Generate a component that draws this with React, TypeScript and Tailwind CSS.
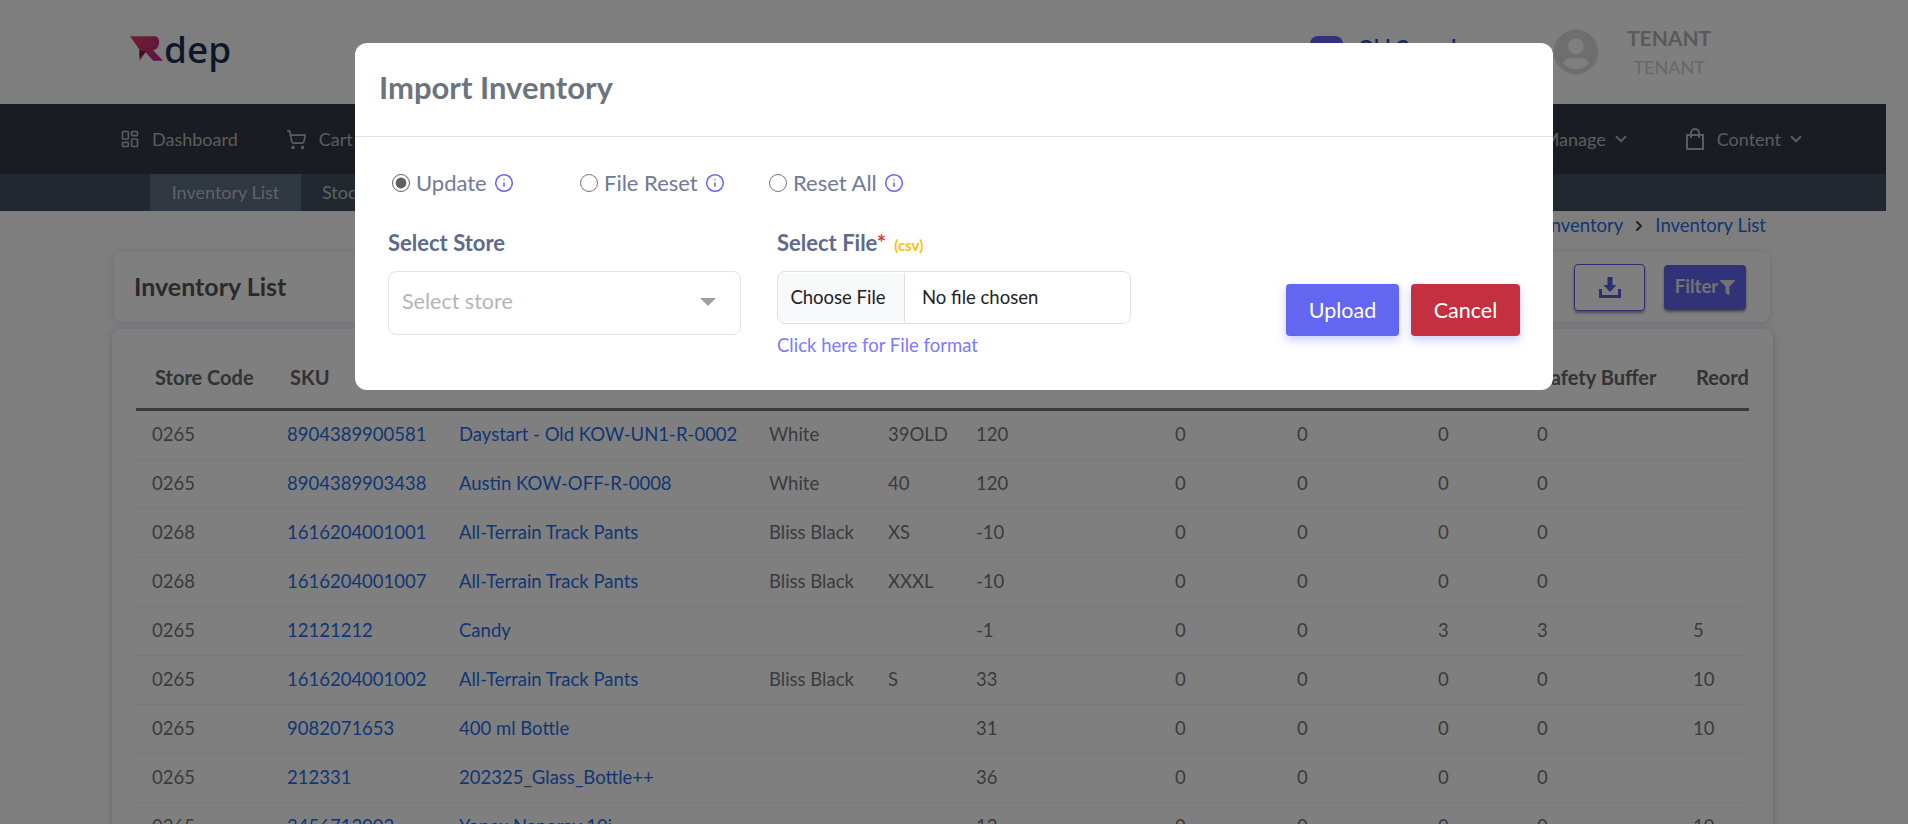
import { ChevronDown, ChevronRight, Info, LayoutDashboard, ShoppingCart } from 'lucide-react';
import { FaFilter, FaUserCircle } from 'react-icons/fa';

const rows = [
  ['0265', '8904389900581', 'Daystart - Old KOW-UN1-R-0002', 'White', '39OLD', '120', '0', '0', '0', '0', ''],
  ['0265', '8904389903438', 'Austin KOW-OFF-R-0008', 'White', '40', '120', '0', '0', '0', '0', ''],
  ['0268', '1616204001001', 'All-Terrain Track Pants', 'Bliss Black', 'XS', '-10', '0', '0', '0', '0', ''],
  ['0268', '1616204001007', 'All-Terrain Track Pants', 'Bliss Black', 'XXXL', '-10', '0', '0', '0', '0', ''],
  ['0265', '12121212', 'Candy', '', '', '-1', '0', '0', '3', '3', '5'],
  ['0265', '1616204001002', 'All-Terrain Track Pants', 'Bliss Black', 'S', '33', '0', '0', '0', '0', '10'],
  ['0265', '9082071653', '400 ml Bottle', '', '', '31', '0', '0', '0', '0', '10'],
  ['0265', '212331', '202325_Glass_Bottle++', '', '', '36', '0', '0', '0', '0', ''],
  ['0265', '3456712002', 'Yonex Nanoray 10i', '', '', '12', '0', '0', '0', '0', '10'],
];

const headers = ['Store Code', 'SKU', 'Product Name', 'Color', 'Size', 'Available', 'Reserved', 'Damaged', 'Hold', 'Safety Buffer', 'Reorder Level'];

const gridCols = 'grid grid-cols-[135px_172px_310px_119px_88px_199px_122px_141px_99px_156px_160px]';

const RadioOption = ({ label, checked, className }: { label: string; checked?: boolean; className: string }) => (
  <label className={`flex items-center gap-[6px] ${className}`}>
    <input type="radio" name="mode" defaultChecked={checked} className="w-[18px] h-[18px] m-0 accent-[#5f5f5f]" />
    <span>{label}</span>
    <Info size={20} strokeWidth={1.8} className="text-[#6366f1] ml-[1px]" />
  </label>
);

const Logo = () => (
  <div className="flex items-center -mt-[8px]">
    <svg width="33" height="25" viewBox="0 0 97 72">
      <defs>
        <linearGradient id="logo-grad" x1="0" y1="0" x2="1" y2="0.6">
          <stop offset="0" stopColor="#e8404f" />
          <stop offset="1" stopColor="#b82a8c" />
        </linearGradient>
      </defs>
      <path d="M0 0H72C85 0 88 14 84 27C81 36 74 40 68 41L97 72H68L46 47L28 72V40Z" fill="url(#logo-grad)" />
      <path d="M28 40L46 47L28 62Z" fill="#6a2440" />
    </svg>
    <span className="text-[37px] leading-none font-medium text-[#182e55] ml-[1px] font-['Noto_Sans',sans-serif]">dep</span>
  </div>
);

export default function App() {
  return (
    <div className="relative w-full h-[824px] overflow-hidden bg-[#fdfdfd] font-['Lato',sans-serif] text-[#777]">
      <div className="w-[1886px]">
        <header className="h-[104px] flex items-center justify-between pl-[130px] pr-[136px]">
          <Logo />
          <div className="flex items-center h-full">
            <div className="flex items-start gap-[15px] mr-[45px] self-start pt-9">
              <div className="w-[33px] h-[24px] rounded-lg bg-[#6366f1]" />
              <span className="text-[20px] leading-6 -mt-[1px] font-bold text-[#2a4fd0]">Old Console</span>
            </div>
            <div className="w-[238px] h-full flex items-center gap-7 pl-[41px] bg-white">
              <FaUserCircle size={46} className="text-[#dcdcdc]" />
              <div className="flex flex-col items-center">
                <span className="text-[21px] leading-7 font-bold text-[#b4b4b4]">TENANT</span>
                <span className="text-lg leading-7 mt-[1px] text-[#d0d0d0]">TENANT</span>
              </div>
            </div>
          </div>
        </header>

        <nav className="h-[70px] flex items-center justify-between pl-[120px] pr-[81px] bg-[#323846] text-[#b8b8b8] text-[18px]">
          <div className="flex items-center gap-[48px]">
            <span className="flex items-center gap-3"><LayoutDashboard size={20} />Dashboard</span>
            <span className="flex items-center gap-3"><ShoppingCart size={21} />Cart</span>
          </div>
          <div className="flex items-center gap-[55px]">
            <span className="flex items-center gap-[6px]">Manage<ChevronDown size={18} strokeWidth={2.5} /></span>
            <span className="flex items-center gap-[12px]">
              <svg width="20" height="22" viewBox="0 0 20 22" fill="none" stroke="currentColor" strokeWidth="2">
                <rect x="2" y="7" width="16" height="14" />
                <path d="M6 10V5a4 4 0 0 1 8 0v5" />
              </svg>
              Content
              <ChevronDown size={18} strokeWidth={2.5} className="-ml-[6px]" />
            </span>
          </div>
        </nav>

        <div className="h-[37px] flex pl-[150px] bg-[#43505e] text-[#c4c4c4] text-[18px]">
          <span className="w-[151px] flex items-center justify-center bg-[#5f6e82]">Inventory List</span>
          <span className="w-[151px] flex items-center pl-[21px]">Stock Ledger</span>
        </div>

        <div className="h-[41px] flex items-center justify-end gap-2 pb-3 pr-[120px] text-[18.5px] text-[#1f6ee8]">
          <span>Inventory</span>
          <ChevronRight size={16} strokeWidth={3} className="text-[#444]" />
          <span>Inventory List</span>
        </div>

        <div className="ml-[114px] w-[1656px] h-[70px] flex items-center justify-between pl-5 pr-6 rounded-lg bg-white shadow-[0_1px_6px_rgba(90,90,200,0.2)]">
          <h2 className="text-[25px] font-bold text-[#555]">Inventory List</h2>
          <div className="flex items-center gap-[19px]">
            <button className="w-[71px] h-[47px] flex items-center justify-center rounded border border-[#5a5adf] shadow-[0_2px_3px_rgba(0,0,0,0.4)]">
              <svg width="24" height="24" viewBox="0 0 24 24" fill="#5a5adf">
                <path d="M9.5 2h5v8h4l-6.500 7-6.500-7h4z" />
                <path d="M1 14h3v6h16v-6h3v9H1z" />
              </svg>
            </button>
            <button className="w-[82px] h-[45px] flex items-center justify-center gap-[2px] rounded bg-[#6366f1] text-[#e4e4e4] font-bold text-[18.5px] shadow-[0_2px_3px_rgba(0,0,0,0.4)]">
              Filter<FaFilter size={15} />
            </button>
          </div>
        </div>

        <div className="ml-[112px] mt-[7px] w-[1661px] h-[520px] pl-6 pr-6 pt-[30px] rounded-lg bg-white shadow-[0_1px_6px_rgba(90,90,200,0.3)]">
          <div className="overflow-hidden">
            <div className={`${gridCols} h-[52px] pl-[16px] border-b-[3px] border-[#777] text-[20px] font-bold text-[#666] whitespace-nowrap`}>
              {headers.map(h => (
                <span key={h} className="pl-[3px] pt-[3px]">{h}</span>
              ))}
            </div>
            {rows.map(row => (
              <div key={row[1]} className={`${gridCols} h-[49px] items-center pl-[16px] border-b border-[#f2f2f2] text-[18.5px] whitespace-nowrap`}>
                {row.map((cell, i) => (
                  <span key={i} className={i === 1 || i === 2 ? 'text-[#1f6ee8]' : ''}>{cell}</span>
                ))}
              </div>
            ))}
          </div>
        </div>
      </div>

      {/* modal backdrop */}
      <div className="absolute inset-0 bg-black/50">
        <div className="absolute left-[355px] top-[43px] w-[1198px] h-[347px] rounded-xl bg-white">
          <div className="h-[94px] flex items-center pl-6 pb-[4px] border-b border-[#e2e2e8]">
            <h1 className="text-[31px] font-bold text-[#6c757d]">Import Inventory</h1>
          </div>
          <div className="pl-[37px] pt-[20px] h-[71px] flex text-[22px] text-[#6e7a96]">
            <RadioOption label="Update" checked className="w-[188px]" />
            <RadioOption label="File Reset" className="w-[189px]" />
            <RadioOption label="Reset All" className="w-[160px]" />
          </div>
          <div className="flex pl-[33px] pt-[19px]">
            <div className="w-[353px] mr-[36px]">
              <div className="h-[44px] -mt-[1px] mb-[1px] text-[22px] font-bold text-[#5e6a89]">Select Store</div>
              <div className="h-[64px] flex items-center justify-between pl-[13px] pr-[24px] pb-[3px] rounded-lg border border-[#e4e4e8] text-[21.500px] text-[#b5b5b5]">
                <span>Select store</span>
                <span className="w-0 h-0 border-x-[8px] border-x-transparent border-t-[8px] border-t-[#a0a0a0]" />
              </div>
            </div>
            <div className="w-[354px]">
              <div className="h-[44px] -mt-[1px] mb-[1px] text-[22px] font-bold text-[#5e6a89]">
                Select File<span className="text-[#dc3545]">*</span>
                <span className="ml-2 text-[15px] text-[#ffc107]">(csv)</span>
              </div>
              <input
                type="file"
                className="block w-[354px] h-[53px] rounded-lg border border-[#e0e0e4] text-[18.5px] text-[#222] file:h-[49px] file:w-[127px] file:mt-[1px] file:mr-[17px] file:pr-[6px] file:border-0 file:border-r file:border-[#dedee2] file:bg-[#f8f9fa] file:text-[18.5px] file:text-[#222]"
              />
              <div className="mt-[8px] text-[18.5px] text-[#7a7afc]">Click here for File format</div>
            </div>
            <div className="flex gap-[12px] ml-[155px] pt-[57px]">
              <button className="w-[113px] h-[52px] rounded bg-[#6366f1] text-white text-[21.500px] shadow-[0_4px_10px_rgba(99,102,241,0.35)]">Upload</button>
              <button className="w-[109px] h-[52px] rounded bg-[#c53040] text-white text-[21.500px] shadow-[0_4px_10px_rgba(99,102,241,0.35)]">Cancel</button>
            </div>
          </div>
        </div>
      </div>
    </div>
  );
}
